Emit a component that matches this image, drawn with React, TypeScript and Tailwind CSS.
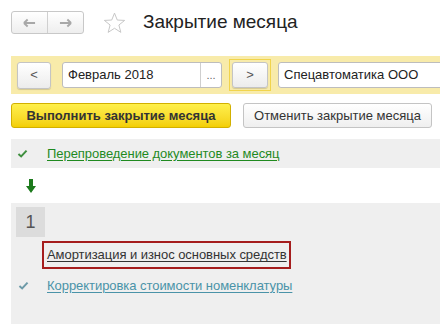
import React from 'react';

const Check: React.FC<{ className?: string }> = ({ className }) => (
  <svg viewBox="0 0 12 10" className={className} fill="none">
    <path d="M1.5 5.5 L4.5 8.2 L10.5 1.8" stroke="currentColor" strokeWidth="2.2" />
  </svg>
);

const App: React.FC = () => {
  return (
    <div className="w-[440px] h-[324px] overflow-hidden whitespace-nowrap bg-white font-['Liberation_Sans',Arial,sans-serif] text-[13px] text-[#333]">
      {/* Header */}
      <div className="flex items-center pt-[11px] pl-[11px] h-[34px]">
        <div className="flex h-[23px] w-[73px] rounded-[3px] border border-[#c8c8c8] bg-gradient-to-b from-white to-[#eeeeee]">
          <div className="flex flex-1 items-center justify-center border-r border-[#d0d0d0]">
            <svg viewBox="0 0 14 10" className="w-[13px] h-[10px]">
              <path d="M1 5 H13 M1 5 L5 1.2 M1 5 L5 8.8" stroke="#a8a8a8" strokeWidth="2" fill="none" />
            </svg>
          </div>
          <div className="flex flex-1 items-center justify-center">
            <svg viewBox="0 0 14 10" className="w-[13px] h-[10px]">
              <path d="M13 5 H1 M13 5 L9 1.2 M13 5 L9 8.8" stroke="#a8a8a8" strokeWidth="2" fill="none" />
            </svg>
          </div>
        </div>
        <svg viewBox="0 0 24 23" className="ml-[19px] w-[23px] h-[22px]">
          <path
            d="M12 1.2 L14.9 8.4 L22.6 8.8 L16.6 13.6 L18.6 21.3 L12 17 L5.4 21.3 L7.4 13.6 L1.4 8.8 L9.1 8.4 Z"
            fill="none"
            stroke="#c4c4c4"
            strokeWidth="1"
          />
        </svg>
        <span className="ml-[17px] text-[19px] text-[#222]">Закрытие месяца</span>
      </div>

      {/* Period bar */}
      <div className="ml-[11px] mt-[22px] flex h-[38px] items-center bg-[#f8ebaa] pl-[6px]">
        <div className="flex h-[27px] w-[34px] shrink-0 items-center justify-center rounded-[3px] border border-[#c4c4c4] bg-gradient-to-b from-white to-[#ececec] text-[#555] shadow-[0_1px_1px_rgba(0,0,0,0.15)]">
          &lt;
        </div>
        <div className="ml-[11px] flex h-[26px] w-[160px] shrink-0 rounded-[3px] border border-[#bdbdbd] bg-white">
          <span className="flex flex-1 items-center pl-[5px] text-[#222]">Февраль 2018</span>
          <span className="flex w-[21px] items-center justify-center border-l border-[#cfcfcf] text-[11px] text-[#666]">...</span>
        </div>
        <div className="ml-[7px] flex h-[32px] w-[42px] shrink-0 items-center justify-center border border-[#f1d44c]">
          <div className="flex h-[26px] w-[36px] items-center justify-center rounded-[3px] border border-[#c4c4c4] bg-gradient-to-b from-white to-[#ececec] text-[#555] shadow-[0_1px_1px_rgba(0,0,0,0.15)]">
            &gt;
          </div>
        </div>
        <div className="ml-[7px] flex h-[26px] w-[180px] shrink-0 items-center rounded-[3px] border border-[#bdbdbd] bg-white pl-[5px] text-[#222]">
          Спецавтоматика ООО
        </div>
      </div>

      {/* Actions */}
      <div className="ml-[11px] mt-[9px] flex h-[25px] gap-[12px]">
        <div className="flex w-[220px] items-center justify-center rounded-[3px] border border-[#d2b000] bg-gradient-to-b from-[#fff04a] to-[#f3cf00] font-bold text-[#333]">
          Выполнить закрытие месяца
        </div>
        <div className="flex w-[189px] items-center justify-center rounded-[3px] border border-[#c4c4c4] bg-gradient-to-b from-white to-[#efefef] text-[#333]">
          Отменить закрытие месяца
        </div>
      </div>

      {/* Step done */}
      <div className="ml-[11px] mt-[11px] flex h-[29px] items-center bg-[#efefef]">
        <Check className="ml-[6px] w-[11px] h-[9px] text-[#3f8f3f]" />
        <span className="ml-[19px] tracking-[-0.05px] text-[#1f8a1f] underline decoration-[#1f8a1f] underline-offset-2">
          Перепроведение документов за месяц
        </span>
      </div>

      <div className="ml-[11px] flex h-[35px] items-center">
        <svg viewBox="0 0 10 14" className="ml-[15px] w-[10px] h-[14px]">
          <path d="M3 0 H7 V7 H10 L5 14 L0 7 H3 Z" fill="#1c7a1c" />
        </svg>
      </div>

      {/* Step 1 */}
      <div className="ml-[11px] h-[130px] bg-[#efefef] pt-[4px]">
        <div className="ml-[5px] flex h-[30px] w-[29px] items-center justify-center bg-[#dcdcdc] text-[18px] text-[#555]">1</div>
        <div className="ml-[31px] mt-[4px] flex h-[28px] w-[249px] items-center overflow-hidden border-2 border-[#a51d1d] pl-[3px]">
          <span className="tracking-[-0.05px] text-[#333] underline underline-offset-2">Амортизация и износ основных средств</span>
        </div>
        <div className="mt-[3px] flex h-[27px] items-center">
          <Check className="ml-[7px] w-[11px] h-[9px] text-[#6d9aa8]" />
          <span className="ml-[18px] tracking-[-0.05px] text-[#4a93a8] underline underline-offset-2">
            Корректировка стоимости номенклатуры
          </span>
        </div>
      </div>
    </div>
  );
};

export default App;
